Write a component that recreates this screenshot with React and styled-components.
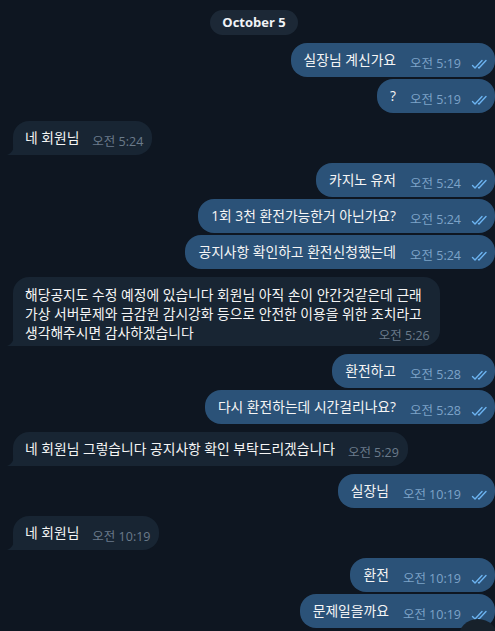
import React from 'react';
import styled, { createGlobalStyle } from 'styled-components';

const GlobalStyle = createGlobalStyle`
  html, body {
    margin: 0;
    padding: 0;
    background: #0e1621;
  }
  * {
    box-sizing: border-box;
  }
`;

const messages = [
  { out: true, items: [['실장님 계신가요', '오전 5:19'], ['?', '오전 5:19']] },
  { out: false, items: [['네 회원님', '오전 5:24']] },
  {
    out: true,
    items: [
      ['카지노 유저', '오전 5:24'],
      ['1회 3천 환전가능한거 아닌가요?', '오전 5:24'],
      ['공지사항 확인하고 환전신청했는데', '오전 5:24']
    ]
  },
  {
    out: false,
    items: [
      [
        [
          '해당공지도 수정 예정에 있습니다 회원님 아직 손이 안간것같은데 근래',
          '가상 서버문제와 금감원 감시강화 등으로 안전한 이용을 위한 조치라고',
          '생각해주시면 감사하겠습니다'
        ],
        '오전 5:26'
      ]
    ]
  },
  { out: true, items: [['환전하고', '오전 5:28'], ['다시 환전하는데 시간걸리나요?', '오전 5:28']] },
  { out: false, items: [['네 회원님 그렇습니다 공지사항 확인 부탁드리겠습니다', '오전 5:29']] },
  { out: true, items: [['실장님', '오전 10:19']] },
  { out: false, items: [['네 회원님', '오전 10:19']] },
  { out: true, items: [['환전', '오전 10:19'], ['문제일을까요', '오전 10:19']] }
];

const Page = styled.div`
  position: relative;
  width: 495px;
  height: 631px;
  overflow: hidden;
  background: #0e1621;
  font-family: 'Open Sans', 'Noto Sans CJK KR', sans-serif;
  color: #f5f5f5;
`;

const Chat = styled.div`
  display: flex;
  flex-direction: column;
  gap: 8px;
  padding: 10px 0 0 13px;
`;

const DateRow = styled.div`
  display: flex;
  justify-content: center;
`;

const DatePill = styled.div`
  height: 25px;
  padding: 0 12px;
  border-radius: 13px;
  background: #1c2836;
  font-size: 13px;
  font-weight: 700;
  line-height: 25px;
  color: #f0f3f6;
`;

const Group = styled.div`
  display: flex;
  flex-direction: column;
  gap: 2px;
  align-items: ${(p) => (p.$out ? 'flex-end' : 'flex-start')};
`;

const Bubble = styled.div`
  position: relative;
  display: flex;
  flex-direction: ${(p) => (p.$multi ? 'column' : 'row')};
  align-items: flex-end;
  padding: ${(p) => (p.$multi ? '8px 18px 2px 12px' : p.$out ? '7px 7px 7px 13px' : '7px 9px 7px 12px')};
  border-radius: 16px;
  border-bottom-left-radius: ${(p) => (p.$out ? '16px' : '0')};
  background: ${(p) => (p.$out ? '#2b5278' : '#182533')};
`;

const Tail = styled.svg`
  position: absolute;
  left: -6px;
  bottom: 0;
  width: 7px;
  height: 11px;
`;

const Text = styled.div`
  font-size: 13.8px;
  line-height: ${(p) => (p.$multi ? '19px' : '20px')};
  white-space: nowrap;
  color: #f5f5f5;
`;

const Meta = styled.div`
  display: flex;
  align-items: center;
  flex-shrink: 0;
  gap: 10px;
  margin: ${(p) => (p.$multi ? '-14px -8px 0 0' : `0 0 -2px ${p.$out ? 14 : 13}px`)};
  font-size: 12.5px;
  line-height: 16px;
  color: ${(p) => (p.$out ? '#7da3c8' : '#6b7b8b')};
`;

const ScrollButton = styled.div`
  position: absolute;
  left: 458px;
  top: 619px;
  width: 40px;
  height: 40px;
  border-radius: 50%;
  background: #17212b;
`;

const Checks = () => (
  <svg width="17" height="11" viewBox="0 0 17 11" fill="none" stroke="#6cb3f0" strokeWidth="1.4" strokeLinecap="round" strokeLinejoin="round">
    <path d="M1.5 6.5 L4 9 L11 1.5" />
    <path d="M7.5 8.6 L8 9 L15 1.5" />
  </svg>
);

const Message = ({ out, text, time }) => {
  const multi = Array.isArray(text);
  return (
    <Bubble $out={out} $multi={multi}>
      {!out && (
        <Tail viewBox="0 0 7 11">
          <path d="M7 0 C7 5 5 9 0 11 L7 11 Z" fill="#182533" />
        </Tail>
      )}
      <Text $multi={multi}>
        {multi
          ? text.map((line, i) => (
              <React.Fragment key={i}>
                {line}
                {i < text.length - 1 && <br />}
              </React.Fragment>
            ))
          : text}
      </Text>
      <Meta $out={out} $multi={multi}>
        <span>{time}</span>
        {out && <Checks />}
      </Meta>
    </Bubble>
  );
};

export default function App() {
  return (
    <Page>
      <GlobalStyle />
      <Chat>
        <DateRow>
          <DatePill>October 5</DatePill>
        </DateRow>
        {messages.map((group, gi) => (
          <Group key={gi} $out={group.out}>
            {group.items.map(([text, time], i) => (
              <Message key={i} out={group.out} text={text} time={time} />
            ))}
          </Group>
        ))}
      </Chat>
      <ScrollButton />
    </Page>
  );
}
